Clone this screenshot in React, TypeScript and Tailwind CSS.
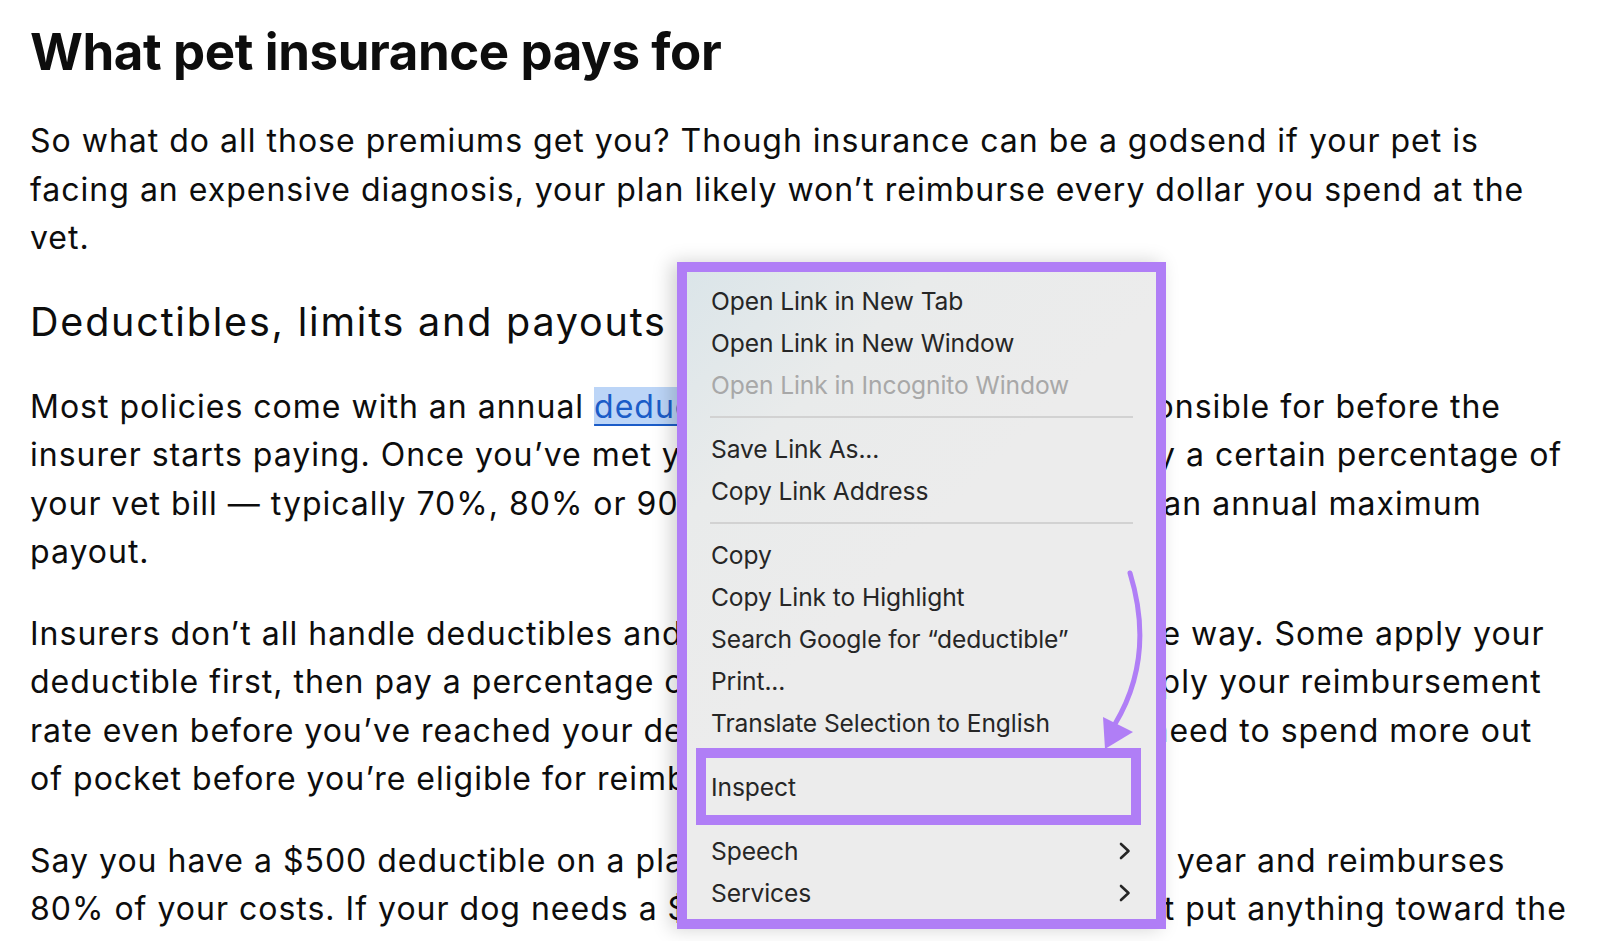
import React from 'react';

type MenuEntry =
  | { kind: 'item'; label: string; disabled?: boolean; submenu?: boolean }
  | { kind: 'sep' };

const menu: MenuEntry[] = [
  { kind: 'item', label: 'Open Link in New Tab' },
  { kind: 'item', label: 'Open Link in New Window' },
  { kind: 'item', label: 'Open Link in Incognito Window', disabled: true },
  { kind: 'sep' },
  { kind: 'item', label: 'Save Link As...' },
  { kind: 'item', label: 'Copy Link Address' },
  { kind: 'sep' },
  { kind: 'item', label: 'Copy' },
  { kind: 'item', label: 'Copy Link to Highlight' },
  { kind: 'item', label: 'Search Google for \u201Cdeductible\u201D' },
  { kind: 'item', label: 'Print...' },
  { kind: 'item', label: 'Translate Selection to English' },
  { kind: 'sep' },
  { kind: 'item', label: 'Inspect' },
  { kind: 'sep' },
  { kind: 'item', label: 'Speech', submenu: true },
  { kind: 'item', label: 'Services', submenu: true },
];

const Line = ({ children }: { children: React.ReactNode }) => (
  <span className="block whitespace-nowrap">{children}</span>
);

const Chevron = () => (
  <svg width="12" height="18" viewBox="0 0 12 18" className="shrink-0">
    <polyline points="2,2 9.5,9 2,16" fill="none" stroke="#262626" strokeWidth="2.6" strokeLinecap="round" strokeLinejoin="round" />
  </svg>
);

const ContextMenu = () => (
  <div className="absolute left-[677px] top-[262px] w-[489px] h-[667px] border-[10px] border-[#b07ef6] shadow-[-6px_0_18px_rgba(0,0,0,0.18)] bg-[linear-gradient(135deg,#dbe5e9_0%,#e9ebeb_22%,#ececec_45%,#ececec_100%)] font-['Inter',sans-serif] text-[24.6px] tracking-[-0.1px] text-[#262626]">
    <div className="flex flex-col pt-[8px] pb-[5px]">
      {menu.map((m, i) =>
        m.kind === 'sep' ? (
          <div key={i} className="h-[22px] flex items-center px-[23px]">
            <div className="h-[2px] w-full bg-[#d2d2d2]" />
          </div>
        ) : (
          <div
            key={i}
            className={`h-[42px] flex items-center justify-between pl-[24px] pr-[25px] ${m.disabled ? 'text-[#a8a8a8]' : ''}`}
          >
            <span className="whitespace-nowrap">{m.label}</span>
            {m.submenu ? <Chevron /> : null}
          </div>
        )
      )}
    </div>

    {/* annotation: highlight around Inspect */}
    <div className="absolute left-[9px] top-[476px] w-[445px] h-[77px] border-[10px] border-[#b07ef6]" />

    {/* annotation: curved arrow */}
    <svg className="absolute left-0 top-0 pointer-events-none" width="469" height="647" viewBox="0 0 469 647">
      <path d="M443 301 C458 350 458 402 428 452" fill="none" stroke="#b07ef6" strokeWidth="5" strokeLinecap="round" />
      <polygon points="416,445 446,460 418,477" fill="#b07ef6" />
    </svg>
  </div>
);

export default function App() {
  return (
    <div className="relative w-[1600px] h-[941px] overflow-hidden bg-white text-[#0d0d0d] font-['Inter',sans-serif]">
      <div className="flex flex-col pl-[30px] pt-[22px]">
        <h1 className="text-[51px] leading-[60px] font-bold tracking-[-0.4px]">What pet insurance pays for</h1>

        <p className="mt-[35px] text-[32px] leading-[48.5px] tracking-[1px]">
          <Line>So what do all those premiums get you? Though insurance can be a godsend if your pet is</Line>
          <Line>facing an expensive diagnosis, your plan likely won’t reimburse every dollar you spend at the</Line>
          <Line>vet.</Line>
        </p>

        <h2 className="mt-[35px] text-[39.5px] leading-[48px] font-normal tracking-[1.8px]">Deductibles, limits and payouts</h2>

        <p className="mt-[37px] text-[32px] leading-[48.5px] tracking-[1px]">
          <Line>
            Most policies come with an annual{' '}
            <a className="text-[#1b5cc8] underline decoration-2 underline-offset-[6px] bg-[#bcd5f7]">deductible</a>, the amount you’re responsible for before the
          </Line>
          <Line>insurer starts paying. Once you’ve met your deductible, most plans pay a certain percentage of</Line>
          <Line>your vet bill — typically 70%, 80% or 90% of eligible charges — up to an annual maximum</Line>
          <Line>payout.</Line>
        </p>

        <p className="mt-[33px] text-[32px] leading-[48.5px] tracking-[1px]">
          <Line>Insurers don’t all handle deductibles and reimbursement rates the same way. Some apply your</Line>
          <Line>deductible first, then pay a percentage of the remaining bill. Others apply your reimbursement</Line>
          <Line>rate even before you’ve reached your deductible, which means you’ll need to spend more out</Line>
          <Line>of pocket before you’re eligible for reimbursement.</Line>
        </p>

        <p className="mt-[33px] text-[32px] leading-[48.5px] tracking-[1px]">
          <Line>Say you have a $500 deductible on a plan which resets every calendar year and reimburses</Line>
          <Line>80% of your costs. If your dog needs a $400 surgery, the insurer won’t put anything toward the</Line>
        </p>
      </div>

      <ContextMenu />
    </div>
  );
}
